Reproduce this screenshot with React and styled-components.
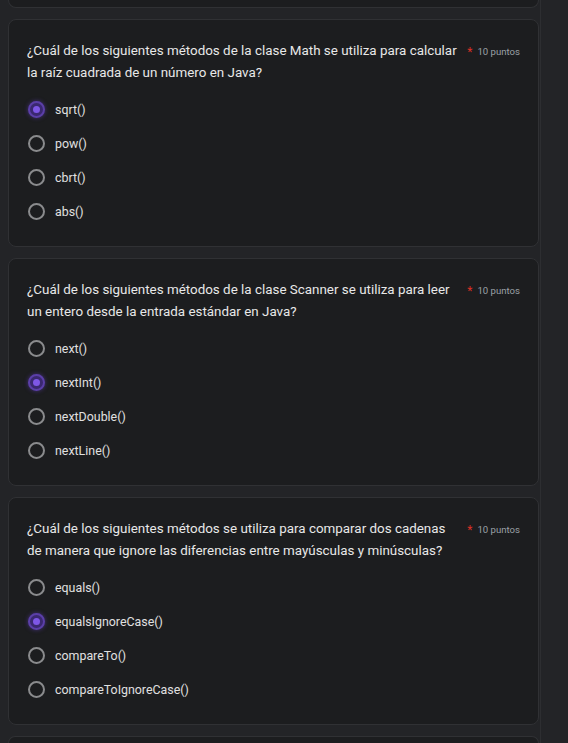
import React from 'react';
import styled, { createGlobalStyle } from 'styled-components';

const GlobalStyle = createGlobalStyle`
  html, body {
    margin: 0;
    padding: 0;
    background: #232427;
    font-family: Roboto, 'Noto Sans', Arial, sans-serif;
  }
`;

const Page = styled.div`
  display: flex;
  height: 743px;
  overflow: hidden;
  background: #232427;
`;

const Column = styled.div`
  width: 541px;
  flex-shrink: 0;
  border-right: 1px solid #2d2e31;
  display: flex;
  flex-direction: column;
  gap: 11px;
  padding-left: 8px;
  padding-right: 1px;
  box-sizing: border-box;
`;

const Gutter = styled.div`
  flex: 1;
  background: #232427;
`;

const Card = styled.div`
  background: #1c1d1f;
  border: 1px solid #303134;
  border-radius: 8px;
  box-sizing: border-box;
  height: ${(p) => p.$height || 'auto'};
  flex-shrink: 0;
  ${(p) => p.$cut === 'top' && 'border-top: none; border-radius: 0 0 8px 8px;'}
  ${(p) => p.$cut === 'bottom' && 'border-bottom: none; border-radius: 8px 8px 0 0; flex: 1;'}
`;

const QuestionCard = styled(Card)`
  height: 228px;
  padding: 20px 18px 0 18px;
`;

const Header = styled.div`
  display: flex;
  align-items: flex-start;
  justify-content: space-between;
`;

const Title = styled.div`
  color: #e8e8e8;
  font-size: 13.4px;
  line-height: 22px;
  width: 436px;
`;

const Points = styled.div`
  display: flex;
  align-items: center;
  gap: 5px;
  font-size: 9.6px;
  color: #9aa0a6;
  line-height: 22px;
  white-space: nowrap;
  padding-top: 1px;
`;

const Star = styled.span`
  color: #d93025;
  font-size: 12px;
`;

const Options = styled.div`
  display: flex;
  flex-direction: column;
  margin-top: 8px;
`;

const Option = styled.label`
  display: flex;
  align-items: center;
  gap: 10px;
  height: 34px;
  padding-left: 1px;
  color: #e0e0e0;
  font-size: 12.4px;
`;

const Radio = styled.span`
  width: 17px;
  height: 17px;
  border-radius: 50%;
  box-sizing: border-box;
  border: 2px solid ${(p) => (p.$checked ? '#5b3fa8' : '#8a8b8d')};
  background: ${(p) => (p.$checked ? '#3a2870' : 'transparent')};
  display: flex;
  align-items: center;
  justify-content: center;
  box-shadow: ${(p) => (p.$checked ? '0 0 4px rgba(110, 70, 220, 0.5)' : 'none')};
  &::after {
    content: '';
    display: ${(p) => (p.$checked ? 'block' : 'none')};
    width: 7px;
    height: 7px;
    border-radius: 50%;
    background: #7e57e6;
  }
`;

const questions = [
  {
    text: '¿Cuál de los siguientes métodos de la clase Math se utiliza para calcular la raíz cuadrada de un número en Java?',
    options: ['sqrt()', 'pow()', 'cbrt()', 'abs()'],
    answer: 0,
  },
  {
    text: '¿Cuál de los siguientes métodos de la clase Scanner se utiliza para leer un entero desde la entrada estándar en Java?',
    options: ['next()', 'nextInt()', 'nextDouble()', 'nextLine()'],
    answer: 1,
  },
  {
    text: '¿Cuál de los siguientes métodos se utiliza para comparar dos cadenas de manera que ignore las diferencias entre mayúsculas y minúsculas?',
    options: ['equals()', 'equalsIgnoreCase()', 'compareTo()', 'compareToIgnoreCase()'],
    answer: 1,
  },
];

export default function App() {
  return (
    <Page>
      <GlobalStyle />
      <Column>
        <Card $cut="top" $height="8px" />
        {questions.map((q, i) => (
          <QuestionCard key={i}>
            <Header>
              <Title>{q.text}</Title>
              <Points>
                <Star>*</Star>
                10 puntos
              </Points>
            </Header>
            <Options>
              {q.options.map((o, j) => (
                <Option key={o}>
                  <Radio $checked={j === q.answer} />
                  {o}
                </Option>
              ))}
            </Options>
          </QuestionCard>
        ))}
        <Card $cut="bottom" />
      </Column>
      <Gutter />
    </Page>
  );
}
